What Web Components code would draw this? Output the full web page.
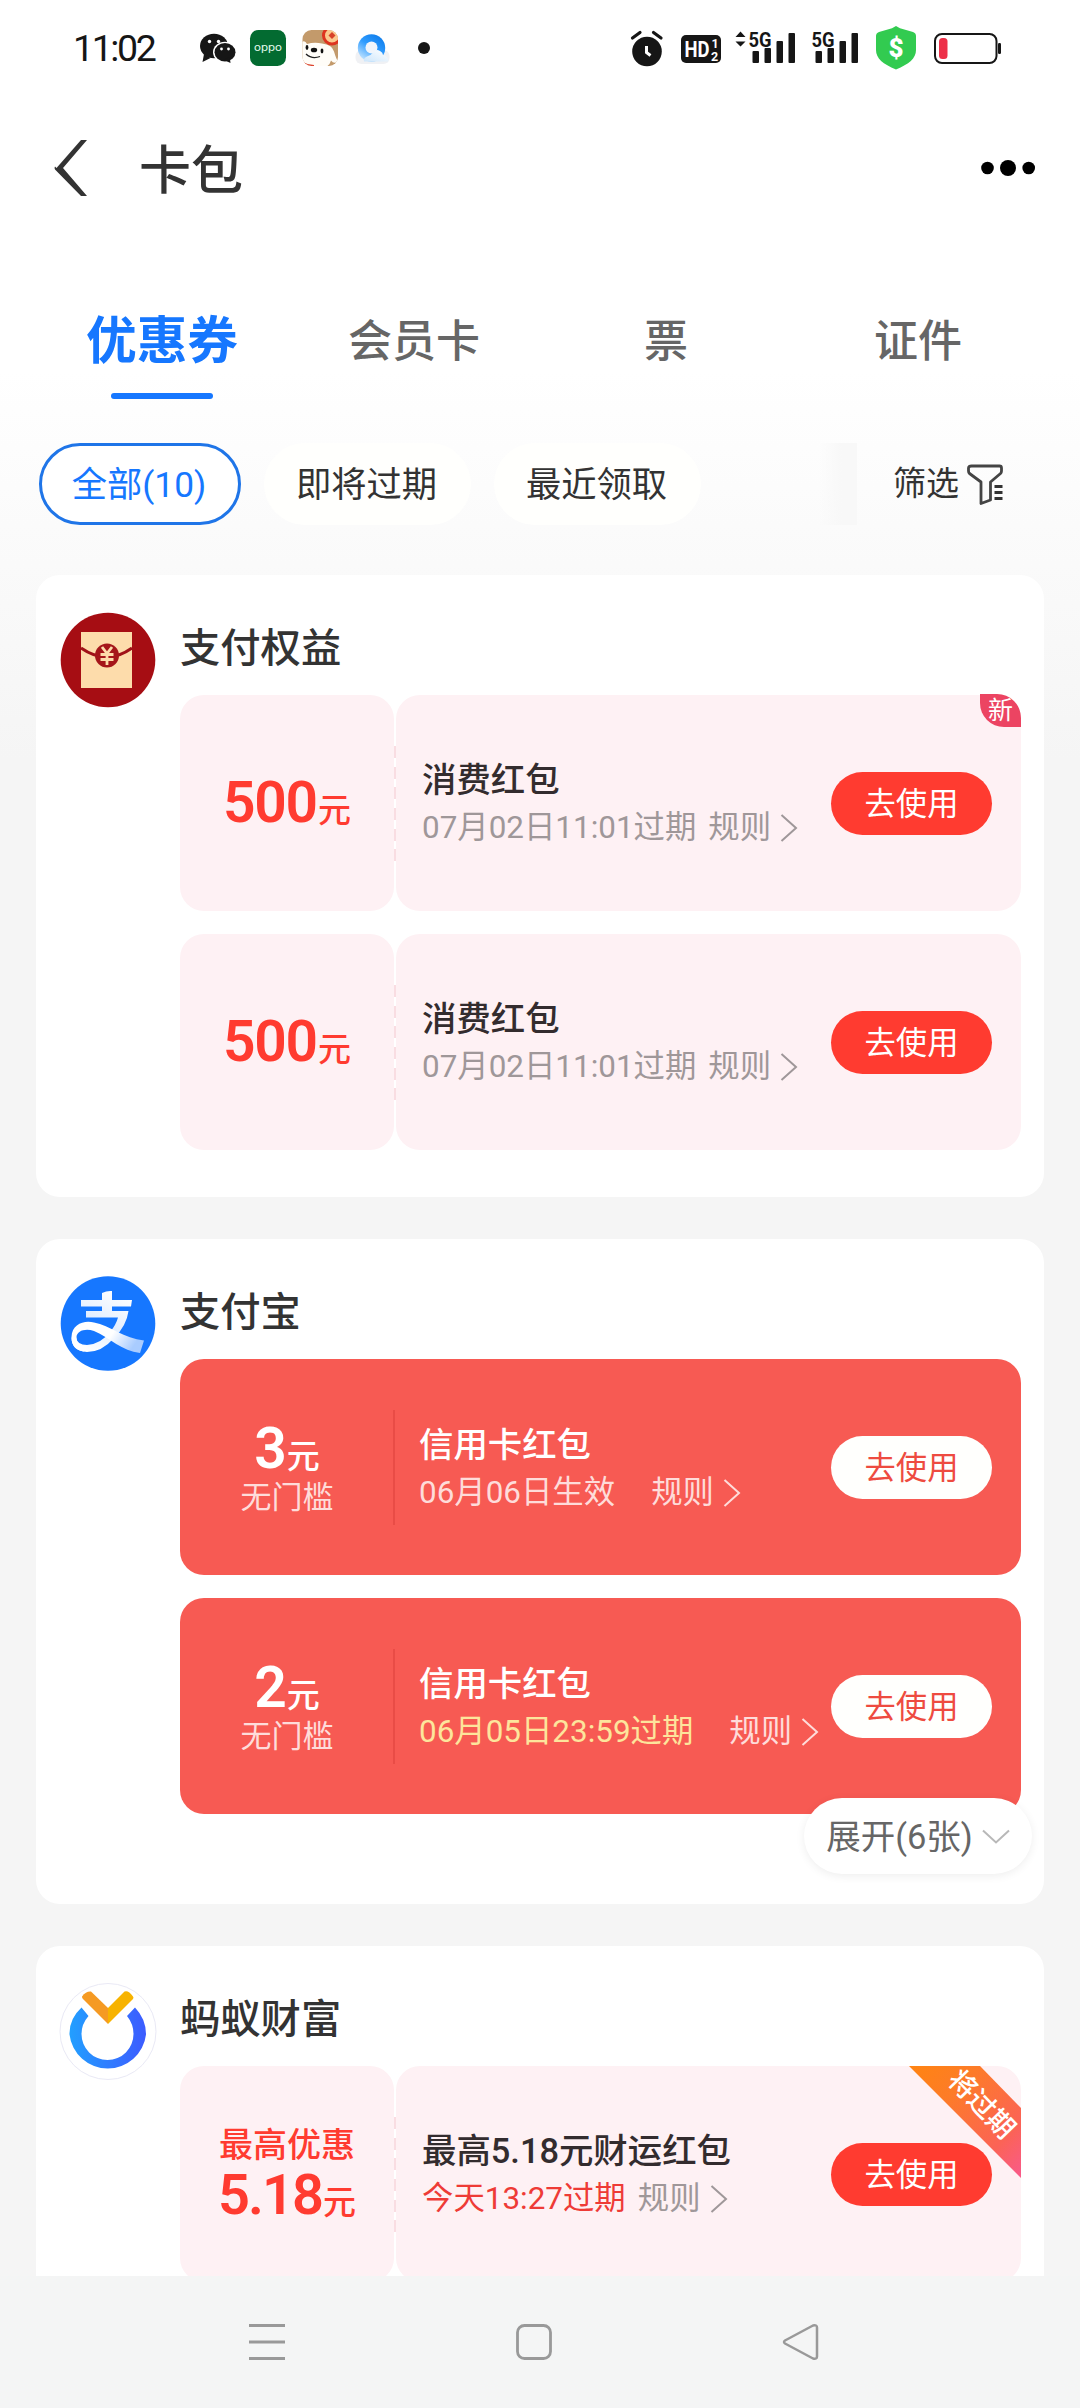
<!DOCTYPE html>
<html lang="zh-CN">
<head>
<meta charset="utf-8">
<title>卡包</title>
<style>
html,body{margin:0;padding:0}
body{width:1080px;height:2408px;overflow:hidden;font-family:Roboto,"Noto Sans CJK SC",sans-serif;background:#f5f5f5}
</style>
</head>
<body>
<wallet-app></wallet-app>
<script>
const define = (name, html, setup) => customElements.define(name, class extends HTMLElement {
  constructor() {
    super();
    const t = document.createElement('template');
    t.innerHTML = html;
    this.attachShadow({ mode: 'open' }).appendChild(t.content.cloneNode(true));
  }
  connectedCallback() { if (setup) setup(this, this.shadowRoot); }
});

define('status-bar', `
<style>
:host{display:flex;height:96px;align-items:center;box-sizing:border-box;padding:0 78px 0 73px;color:#161616}
time{font-size:37.5px;line-height:40px;letter-spacing:-2.4px;width:127px;white-space:nowrap}
svg{display:block}
</style>
<time>11:02</time>
<svg width="240" height="96" viewBox="200 0 240 96">
  <g fill="#161616"><ellipse cx="214" cy="46" rx="14" ry="12.2"/><path d="M204 54l-1.500 8 8-4z"/></g>
  <g fill="#fff"><circle cx="209.500" cy="41.500" r="1.700"/><circle cx="218.500" cy="41.500" r="1.700"/><ellipse cx="225" cy="52.200" rx="12" ry="10.500"/></g>
  <g fill="#161616"><ellipse cx="225" cy="52.300" rx="10.500" ry="9.200"/><path d="M224 60l6.500 3-0.800-6z"/></g>
  <circle cx="221.500" cy="49" r="1.400" fill="#fff"/><circle cx="228.500" cy="49" r="1.400" fill="#fff"/>
  <rect x="250" y="30" width="36" height="36" rx="8.500" fill="#036b31"/>
  <text x="268" y="50.500" font-family="Inter" font-size="10" font-weight="400" fill="#e8fff0" text-anchor="middle" textLength="28" lengthAdjust="spacingAndGlyphs">oppo</text>
  <defs>
    <clipPath id="d"><rect x="302.500" y="30" width="35.500" height="36" rx="9"/></clipPath>
    <linearGradient id="c" x1=".9" y1="0" x2=".2" y2="1"><stop offset="0" stop-color="#0a78e8"/><stop offset=".5" stop-color="#2f9cff"/><stop offset="1" stop-color="#cfeaff"/></linearGradient>
    <linearGradient id="w" x1="1" y1="0" x2="0" y2="1"><stop offset="0" stop-color="#fff"/><stop offset="1" stop-color="#cde6fb"/></linearGradient>
  </defs>
  <g clip-path="url(#d)">
    <rect x="302" y="30" width="37" height="36" fill="#c39a6b"/>
    <path d="M302 42q3-2 5 2 7-2 15-.5 10 1 12 8 2 7 4 10-4 3-7-1-2 8-13 8-15 0-16-12z" fill="#fffdf8"/>
    <circle cx="332" cy="35.500" r="8.500" fill="#fbc98e" stroke="#dd3420" stroke-width="3"/>
    <path d="M332 32l3.500 3.500-3.500 3.500-3.500-3.500z" fill="#d84228"/>
    <ellipse cx="314" cy="50" rx="3.200" ry="2.300" fill="#111"/>
    <ellipse cx="307" cy="47.500" rx="1.400" ry="2.400" fill="#111"/><ellipse cx="322" cy="51" rx="1.400" ry="2.400" fill="#111"/>
    <path d="M306 54q6 5.500 14 2.500" fill="none" stroke="#222" stroke-width="1.300"/>
    <path d="M303 63q5 3 11 3" stroke="#dd4630" stroke-width="2" fill="none"/>
  </g>
  <rect x="355.500" y="50" width="34" height="14" rx="6" fill="#f0f1f4"/>
  <circle cx="371.500" cy="48" r="13.700" fill="url(#c)"/>
  <circle cx="371.500" cy="47.500" r="6" fill="#f1f5fb"/>
  <path d="M364 61.500q-1-3 3-5 4-1 6-4 3-4 7-1.500 3 1.500 3 4 5 1 5.500 6.500z" fill="url(#w)"/>
  <circle cx="424" cy="48" r="6" fill="#161616"/>
</svg>
<svg width="372" height="96" viewBox="630 0 372 96" style="margin-left:auto">
  <g fill="#161616"><circle cx="647" cy="51.500" r="14.800"/>
  <path d="M632.500 38l7.500-5.500M661 38l-7.500-5.500" stroke="#161616" stroke-width="3.200" stroke-linecap="round"/></g>
  <path d="M646.500 46v6.500l4 3" fill="none" stroke="#fff" stroke-width="3"/>
  <rect x="681" y="35" width="40" height="28" rx="5" fill="#161616"/>
  <g fill="#fff" font-family="Roboto" font-weight="700"><text x="684.500" y="57" font-size="22.500" textLength="25" lengthAdjust="spacingAndGlyphs">HD</text><text x="711.500" y="48" font-size="12.500">1</text><text x="711" y="60.500" font-size="12.500">2</text></g>
  <path d="M735.500 37l5-5.500 5 5.500zM735.500 41.500h10l-5 5z" fill="#161616"/>
  <g fill="#161616" font-family="Roboto" font-weight="700" font-size="20.500"><text x="748.500" y="46.500" textLength="23" lengthAdjust="spacingAndGlyphs">5G</text><text x="811.500" y="46.500" textLength="23" lengthAdjust="spacingAndGlyphs">5G</text></g>
  <g fill="#161616" id="b"><rect x="752.500" y="51" width="6.500" height="12" rx="1"/><rect x="764.500" y="48" width="6.500" height="15" rx="1"/><rect x="776.500" y="41" width="6.500" height="22" rx="1"/><rect x="788.500" y="33" width="6.500" height="30" rx="1"/></g>
  <use href="#b" x="63"/>
  <path d="M896 26l-4 2.300-13 3.800q-3 1-3 4v14c0 8.500 7 14 20 19.500 13-5.500 20-11 20-19.500v-14q0-3-3-4l-13-3.800z" fill="#32cb50"/>
  <text x="896" y="57" font-family="Roboto" font-weight="900" font-size="26" fill="#fff" text-anchor="middle">$</text>
  <rect x="935" y="34" width="61.500" height="29" rx="7" fill="none" stroke="#161616" stroke-width="2"/>
  <rect x="939" y="38" width="8.500" height="21" rx="3.500" fill="#ed3048"/>
  <rect x="998" y="43" width="3" height="11" rx="1.200" fill="#161616"/>
</svg>`);

define('title-bar', `
<style>
:host{display:flex;align-items:center;height:144px;padding:0 44px 0 54px}
h1{font-size:52px;line-height:60px;font-weight:500;color:#333;margin:8px 0 0 50px}
svg{display:block}
.more{margin-left:auto}
</style>
<svg width="35" height="58" viewBox="0 0 35 58"><path d="M2.500 29L27 1h6L9 29l24 28h-6L1 30.500q-1-1.500 0-3z" fill="#333"/></svg>
<h1><slot></slot></h1>
<svg class="more" width="56" height="18" viewBox="0 0 56 18"><circle cx="7.500" cy="9" r="6.300"/><circle cx="28" cy="9" r="8"/><circle cx="48.700" cy="9" r="6.300"/></svg>`);

define('tab-item', `
<style>
:host{display:flex;flex-direction:column;align-items:center;width:252px;height:159px;color:#666;font-size:44px;font-weight:500}
span{line-height:60px;height:60px;margin-top:72px;white-space:nowrap}
i{display:block;width:102px;height:6px;border-radius:3px;margin-top:21px}
:host([active]){color:#1677ff;font-size:50.700px;font-weight:700}
:host([active]) i{background:#1677ff}
</style><span><slot></slot></span><i></i>`);

define('tab-row', `<style>:host{display:flex;padding:0 36px;height:203px;box-sizing:border-box}</style><slot></slot>`);

define('filter-chip', `
<style>
:host{display:flex;align-items:center;justify-content:center;box-sizing:border-box;height:82px;border-radius:41px;background:#fffffd;color:#333;width:207px;font-size:35.300px;line-height:48px;white-space:nowrap;padding:1px 2px 0 0}
:host([active]){border:3px solid #1f75e8;color:#1677ff;background:#fff;width:202px}
</style><slot></slot>`);

define('filter-row', `
<style>
:host{display:flex;align-items:center;gap:23px;padding-left:39px;height:82px}
.fade{width:38px;height:82px;margin-left:95px;background:linear-gradient(90deg,rgba(247,247,247,0),#f8f8f8 60%)}
.sel{display:flex;align-items:center;gap:8px;font-size:33px;line-height:46px;color:#333;margin-left:13px}
svg{display:block;margin-top:2px}
</style>
<slot></slot><div class="fade"></div>
<div class="sel"><span>筛选</span>
<svg width="37" height="42" viewBox="0 0 37 42"><path d="M4.500 2h28q2 0 2 2v3q0 1.500-1 2.500L23.500 18v18l-9.500 3.500V18L2.500 9.500Q1.500 8.500 1.500 7V4q0-2 3-2z" fill="none" stroke="#444" stroke-width="2.800" stroke-linejoin="round"/><path d="M27.500 22.500h8M27.500 28.500h8M27.500 34.500h8" stroke="#333" stroke-width="2.800"/></svg></div>`);

define('coupon-group', `
<style>
:host{display:grid;grid-template-columns:94px 841px;column-gap:25px;box-sizing:border-box;background:#fff;border-radius:24px;padding:37px 23px 0 25px;position:relative;align-content:start}
.icon{display:block;height:96px}
h2{font-size:40.300px;line-height:50px;font-weight:500;color:#333;margin:12px 0 21px}
.list{display:flex;flex-direction:column;gap:23px}
::slotted(expand-pill){position:absolute;right:12px;top:559px}
</style>
<div class="icon"><slot name="icon"></slot></div>
<div><h2></h2><div class="list"><slot></slot></div></div><slot name="more"></slot>`,
(el, r) => { r.querySelector('h2').textContent = el.getAttribute('name'); });

define('coupon-ticket', `
<style>
:host{display:grid;grid-template-columns:214px 1fr;column-gap:2px;height:216px;position:relative;--bg:#fef1f4;--main:#ff3b30;--ink:#332c2e;--sub:#9f9799}
.l,.r{background:var(--bg);border-radius:24px}
.l{display:flex;flex-direction:column;align-items:center;justify-content:center;color:var(--main);font-size:34px;line-height:44px;font-weight:500}
.amt{display:flex;align-items:baseline;line-height:56px;height:56px;font-size:33px;white-space:nowrap}
.amt b{font-size:57px;font-weight:600;letter-spacing:-1.300px;margin-right:1px}
.pre{margin-top:-2px}
.pre + .amt b{font-size:56px;letter-spacing:-2px}
.cond{font-size:31px;line-height:42px;font-weight:400;color:#fedcda}
.r{display:flex;align-items:center;justify-content:space-between;padding:0 29px 0 26px;min-width:0}
.t{font-size:34.400px;line-height:44px;font-weight:500;color:var(--ink);white-space:nowrap}
.s{display:flex;align-items:center;font-size:31.400px;line-height:42px;color:var(--sub);white-space:nowrap;margin-top:5px}
.rule{display:flex;align-items:center;gap:9px;margin-left:12px}
.go{flex:none;width:161px;height:63px;border-radius:32px;background:#ff3b30;color:#fff;font-size:31.300px;line-height:65px;text-align:center;margin-left:-30px}
svg{display:block}
.sep{position:absolute;left:214px;top:51px;width:2px;height:115px;background:repeating-linear-gradient(#f9dde2 0 12px,transparent 12px 20.700px)}
:host([solid]){--bg:transparent;--main:#fff;--ink:#fff;--sub:#fedcda;background:#f75a53;border-radius:24px}
:host([solid]) .sep{left:213px;background:#e94c46}
:host([solid]) .r{padding-left:23px}
:host([solid]) .rule{margin-left:36px}
:host([solid]) .go{background:#fffffd;color:#ee4b40}
:host([solid]) .l{padding-top:5px;box-sizing:border-box}
:host([solid]) .info{margin-top:2px}
.urgent{color:var(--u,#ee3b36)}
:host([solid]) .urgent{color:#fde59c}
.new{display:none;position:absolute;right:0;top:-1px;width:41px;height:33px;border-radius:0 24px 0 24px;background:#ec4462;color:#fff;font-size:25px;line-height:34px;text-align:center}
:host([badge=new]) .new{display:block}
.rib{display:none;position:absolute;right:0;top:0;width:112px;height:112px}
:host([badge=soon]) .rib{display:block}
</style>
<div class="l"><span class="pre"></span><span class="amt"><b></b>元</span><span class="cond"></span></div>
<div class="r"><div class="info"><div class="t"></div><div class="s"><span class="d"></span><span class="rule">规则<svg width="18" height="30" viewBox="0 0 18 30"><path d="M1.500 2L16 15 1.500 28" fill="none" stroke="currentColor" stroke-width="2"/></svg></span></div></div>
<div class="go">去使用</div></div>
<i class="sep"></i><div class="new">新</div>
<svg class="rib" viewBox="0 0 112 112"><defs><linearGradient id="g" x1="0" y1="0" x2="1" y2="1"><stop offset="0" stop-color="#ff8411"/><stop offset=".3" stop-color="#fd7c27"/><stop offset=".75" stop-color="#fb6356"/><stop offset="1" stop-color="#f95a8c"/></linearGradient></defs>
<path d="M0 0H71L112 42V112z" fill="url(#g)"/><text transform="translate(73 38) rotate(46)" text-anchor="middle" y="10" font-size="27.500" font-weight="500" fill="#fff" font-family="Noto Sans CJK SC">将过期</text></svg>`,
(el, r) => {
  const put = (sel, attr) => {
    const n = r.querySelector(sel), v = el.getAttribute(attr);
    if (v) n.textContent = v; else n.remove();
  };
  put('.pre', 'pre'); put('.amt b', 'amount'); put('.cond', 'cond'); put('.t', 'name'); put('.d', 'date');
  if (el.hasAttribute('urgent')) r.querySelector('.d').classList.add('urgent');
});

define('expand-pill', `
<style>
:host{display:flex;align-items:center;justify-content:center;gap:9px;width:228px;height:76px;border-radius:38px;background:#fff;box-shadow:0 2px 10px rgba(0,0,0,.07);font-size:34.500px;line-height:48px;color:#666;white-space:nowrap;box-sizing:border-box;padding-top:1px}
svg{display:block}
</style><slot></slot><svg width="28" height="16" viewBox="0 0 28 16"><path d="M1 1.500L14 13.500 27 1.500" fill="none" stroke="#b8b8b8" stroke-width="2"/></svg>`);

define('brand-icon', `
<style>:host{display:block;width:96px;height:98px;margin-left:-1px}svg{display:none}
:host([kind=packet]) .p,:host([kind=alipay]) .a,:host([kind=fortune]) .f{display:block}</style>
<svg class="p" width="96" height="98" viewBox="0 0 96 98"><circle cx="48" cy="48" r="47.300" fill="#a60d13"/><rect x="21" y="20" width="51" height="56" fill="#fddcab"/>
<path d="M21 36q26 18 51 0" fill="none" stroke="#a01218" stroke-width="3"/><circle cx="47" cy="43.500" r="12" fill="#a5161a"/>
<path d="M42 35l5 6.500 5-6.500M47 41.500V53M40.500 42.500h13M40.500 47.500h13" fill="none" stroke="#fddcab" stroke-width="2.800"/></svg>
<svg class="a" width="96" height="98" viewBox="0 0 96 98"><defs><linearGradient id="s" x1="0" y1="0" x2="1" y2=".3"><stop offset="0" stop-color="#fff"/><stop offset=".62" stop-color="#fff"/><stop offset="1" stop-color="#a9ccff"/></linearGradient><linearGradient id="v" x1=".8" y1="0" x2=".3" y2="1"><stop offset="0" stop-color="#fff"/><stop offset=".55" stop-color="#e2eeff"/><stop offset="1" stop-color="#fff"/></linearGradient></defs>
<circle cx="48" cy="47.500" r="47.300" fill="#1677ff"/>
<path d="M42 17q5-2.500 10-2V24h20l-1 6.500H52V35h16.500q-2 15-14.500 27Q42 76 27 76 11.500 75 11.500 61.500L16 61q1 8 11 8 14-1 23-13 6-7 8-14.500H26V35h16v-4.500H21V24h21z" fill="url(#v)"/>
<path d="M11.500 61C12 48 24 44 34 46.500c16 3 30 16 50 18l-4 12.500C62 75 50 62 34 55c-9-3-17 0-17.500 6 0 6 4 9.500 11 9.500q-2 4.500-4 5-12-2-12-14.500z" fill="url(#s)"/></svg>
<svg class="f" width="98" height="98" viewBox="0 0 98 98" style="margin:0 0 0 -1px"><defs><linearGradient id="r" x1="0" y1="0" x2="1" y2="0"><stop offset="0" stop-color="#229fff"/><stop offset="1" stop-color="#3c5bff"/></linearGradient></defs>
<circle cx="49" cy="48.500" r="48" fill="#fff" stroke="#e9e9f5"/>
<path d="M22.500 24.500Q10 36 10.500 51.500A38.500 38.500 0 0 0 87 51.500Q87 36 76 24.500L68 33q6.500 8 6.500 18a26 26 0 0 1-52 0q0-10 7-18z" fill="url(#r)"/>
<path d="M23 13.500Q27 8 32 8.500L49 25V41L24 16q-1-1 -1-2.500z" fill="#f59a23"/><path d="M49 25L65.500 8.500q4-1.500 8.500 5 1 1 0 2.500L49 41z" fill="#f7b300"/></svg>`);

define('nav-bar', `
<style>:host{display:flex;height:132px;background:#f4f5f5;align-items:center;justify-content:space-between;padding:0 259px 0 247px}svg{display:block}</style>
<svg width="40" height="40" viewBox="0 0 40 40" fill="none" stroke="#999" stroke-width="3"><path d="M2 3.500h36M2 20h36M2 36.500h36"/></svg>
<svg width="40" height="40" viewBox="0 0 40 40" fill="none" stroke="#999" stroke-width="2.800"><rect x="3.500" y="3.500" width="33" height="33" rx="7"/></svg>
<svg width="40" height="40" viewBox="0 0 40 40" fill="none" stroke="#999" stroke-width="2.500" stroke-linejoin="round"><path d="M4 18.500L32 3.500q4-1 4 2v29q0 3-4 2L4 21.500q-2-1.500 0-3z"/></svg>`);

define('wallet-app', `
<style>
:host{display:flex;flex-direction:column;width:1080px;height:2408px;background:linear-gradient(#fff 0,#fff 370px,#f5f5f5 760px)}
main{height:1751px;flex:none;padding:50px 36px 0;overflow:hidden;box-sizing:border-box;display:flex;flex-direction:column;gap:42px;width:1080px}
coupon-group{flex:none}
</style>
<status-bar></status-bar>
<title-bar>卡包</title-bar>
<tab-row><tab-item active>优惠券</tab-item><tab-item>会员卡</tab-item><tab-item>票</tab-item><tab-item>证件</tab-item></tab-row>
<filter-row><filter-chip active>全部(10)</filter-chip><filter-chip>即将过期</filter-chip><filter-chip>最近领取</filter-chip></filter-row>
<main>
<coupon-group name="支付权益" style="height:622px"><brand-icon slot="icon" kind="packet"></brand-icon>
<coupon-ticket amount="500" name="消费红包" date="07月02日11:01过期" badge="new"></coupon-ticket>
<coupon-ticket amount="500" name="消费红包" date="07月02日11:01过期"></coupon-ticket></coupon-group>
<coupon-group name="支付宝" style="height:665px"><brand-icon slot="icon" kind="alipay"></brand-icon>
<coupon-ticket solid amount="3" cond="无门槛" name="信用卡红包" date="06月06日生效"></coupon-ticket>
<coupon-ticket solid urgent amount="2" cond="无门槛" name="信用卡红包" date="06月05日23:59过期"></coupon-ticket>
<expand-pill slot="more">展开(6张)</expand-pill></coupon-group>
<coupon-group name="蚂蚁财富" style="height:420px"><brand-icon slot="icon" kind="fortune"></brand-icon>
<coupon-ticket urgent pre="最高优惠" amount="5.18" name="最高5.18元财运红包" date="今天13:27过期" badge="soon"></coupon-ticket></coupon-group>
</main>
<nav-bar></nav-bar>`);
</script>
</body>
</html>
